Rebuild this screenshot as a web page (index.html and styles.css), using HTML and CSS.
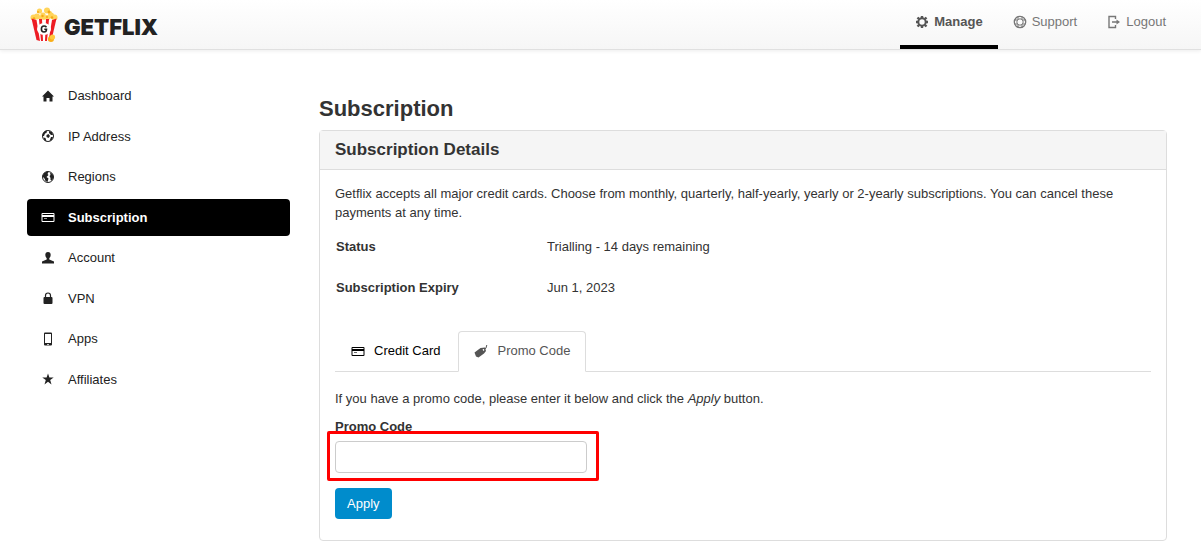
FILE: index.html
```
<!DOCTYPE html>
<html lang="en">
<head>
<meta charset="utf-8">
<meta name="viewport" content="width=device-width, initial-scale=1">
<title>Getflix - Subscription</title>
<link rel="stylesheet" href="styles.css">
</head>
<body>
<svg class="symbols" aria-hidden="true">
  <symbol id="card" viewBox="0 0 14 14"><path fill="currentColor" fill-rule="evenodd" d="M1.500 3h11q1 0 1 1v7q0 1-1 1h-11q-1 0-1-1V4q0-1 1-1zM1.500 4v1h11V4zM1.500 7v4h11V7z"/><path fill="currentColor" opacity=".6" d="M3 8h3v1H3z"/></symbol>
</svg>
<header class="topbar">
  <a class="brand" href="#">
    <svg class="brand-icon" viewBox="0 0 28 36" aria-hidden="true">
      <g fill="#ffd45a">
        <circle cx="9.500" cy="4" r="2.600"/><circle cx="17" cy="3.500" r="3"/><circle cx="13" cy="8" r="2.600"/><circle cx="20" cy="6" r="2"/>
        <circle cx="3.500" cy="10.500" r="3"/><circle cx="7" cy="9.500" r="3"/><circle cx="12" cy="11" r="3"/><circle cx="17" cy="11" r="3"/><circle cx="21" cy="8.500" r="3"/><circle cx="24.500" cy="10.500" r="3"/>
      </g>
      <g fill="#f5a914"><circle cx="4" cy="11.500" r="1.300"/><circle cx="8" cy="5" r="1"/><circle cx="19" cy="5" r="1.400"/><circle cx="12.500" cy="9" r="1.200"/><circle cx="22" cy="10.500" r="1.300"/><circle cx="17" cy="10" r="1"/></g>
      <path fill="#fff" d="M2 12l5 21q7 3 14 0l5-21-5 1-4-1-3 1-4-1-3 1z"/>
      <g fill="#ed1c24"><path d="M1.500 11.500l5 1.500 3.500 21-3.500-1z"/><path d="M9 12h3l1 22h-2z"/><path d="M16 12h3l-2 22h-2z"/><path d="M22 13l4.500-1.500-5 21.500-3 1z"/></g>
      <ellipse cx="14" cy="22" rx="7" ry="6" fill="#fff"/>
      <path d="M16.500 20.200q-1-1.200-2.500-1.200-2.600 0-2.600 3t2.600 3q2.500 0 2.500-2.700h-2.200" fill="none" stroke="#222" stroke-width="1.600"/>
      <circle cx="21" cy="32" r="3" fill="#f9ae17"/><circle cx="22.500" cy="30" r="2.600" fill="#ffc93c"/>
    </svg>
    <span class="brand-name">GETFLIX</span>
  </a>
  <nav class="topnav" aria-label="Main">
    <a class="toplink toplink-active" href="#">
      <svg class="icon" viewBox="0 0 14 14" aria-hidden="true"><circle cx="7" cy="7" r="3.700" fill="none" stroke="currentColor" stroke-width="2"/><path d="M7 1v2M7 11v2M1 7h2M11 7h2M2.500 2.500l1.700 1.700M9.800 9.800l1.700 1.700M11.500 2.500L9.800 4.200M4.200 9.800l-1.700 1.700" stroke="currentColor" stroke-width="2.400"/></svg>
      <span>Manage</span>
    </a>
    <a class="toplink" href="#">
      <svg class="icon" viewBox="0 0 14 14" aria-hidden="true"><g fill="none" stroke="currentColor"><circle cx="7" cy="7" r="5.700" stroke-width="1.300"/><circle cx="7" cy="7" r="3.200"/><path d="M5 1.500v3M9 1.500v3M5 9.500v3M9 9.500v3M1.500 5h3M1.500 9h3M9.500 5h3M9.500 9h3"/></g></svg>
      <span>Support</span>
    </a>
    <a class="toplink" href="#">
      <svg class="icon" viewBox="0 0 14 14" aria-hidden="true"><path d="M8.500 4V1.500h-6.500v11h6.500V10M5 7h6" fill="none" stroke="currentColor" stroke-width="1.400"/><path d="M9.500 4.500L13 7 9.500 9.500z" fill="currentColor"/></svg>
      <span>Logout</span>
    </a>
  </nav>
</header>
<div class="layout">
  <nav class="sidebar" aria-label="Account">
    <a class="sidelink" href="#"><svg class="icon" viewBox="0 0 14 14" aria-hidden="true"><path fill="currentColor" d="M7 1.500L13 7.500h-1.500v5h-3V9h-3v3.500h-3v-5H1z"/></svg><span>Dashboard</span></a>
    <a class="sidelink" href="#"><svg class="icon" viewBox="0 0 14 14" aria-hidden="true"><circle cx="7" cy="7" r="5.500" fill="none" stroke="currentColor"/><path fill="currentColor" d="M2 4l2-2 2-.5L5.500 4 4 4.500 3 7 1.500 7zM8 2l3 1 1 3-2 0-2-2zM5.500 6l2-1 1.500 2-1.500 2-2-1zM2.500 8.500l2 .5 1 3.500-2-1zM10 8l2 0-1 3-2.500 1z"/></svg><span>IP Address</span></a>
    <a class="sidelink" href="#"><svg class="icon" viewBox="0 0 14 14" aria-hidden="true"><circle cx="7" cy="7" r="5.500" fill="none" stroke="currentColor"/><path fill="currentColor" d="M1.500 6L3 3l3-1.500 1.500.5-1 2 1 1-2 2 2 1.500-1 3.500-2-1-1-2.500L2 7zM9 2.500l2.500 1.500L12.500 7 11 10.500 9.500 10V8L8.500 6l1-1z"/></svg><span>Regions</span></a>
    <a class="sidelink sidelink-active" href="#" aria-current="page"><svg class="icon" aria-hidden="true"><use href="#card"/></svg><span>Subscription</span></a>
    <a class="sidelink" href="#"><svg class="icon" viewBox="0 0 14 14" aria-hidden="true"><path fill="currentColor" d="M7 1q2.700 0 2.700 3Q9.700 6 8.300 7.300v1.200L13 10.500v2H1v-2l4.700-2V7.300Q4.300 6 4.300 4 4.300 1 7 1z"/></svg><span>Account</span></a>
    <a class="sidelink" href="#"><svg class="icon" viewBox="0 0 14 14" aria-hidden="true"><rect x="2.500" y="6" width="9" height="7" rx="1" fill="currentColor"/><path d="M4.500 6.500V4.500q0-2.500 2.500-2.500t2.500 2.500v2" fill="none" stroke="currentColor" stroke-width="1.200"/></svg><span>VPN</span></a>
    <a class="sidelink" href="#"><svg class="icon" viewBox="0 0 14 14" aria-hidden="true"><path fill="currentColor" fill-rule="evenodd" d="M4 .5h6q1 0 1 1v11q0 1-1 1H4q-1 0-1-1v-11q0-1 1-1zM4 2v9h6V2zM6 12v.8h2V12z"/></svg><span>Apps</span></a>
    <a class="sidelink" href="#"><svg class="icon" viewBox="0 0 14 14" aria-hidden="true"><path fill="currentColor" d="M7 1.500l1.400 4h4.300L9.200 8l1.300 4.500L7 9.800l-3.500 2.700L4.800 8 1.300 5.500h4.300z"/></svg><span>Affiliates</span></a>
  </nav>
  <main class="content">
    <h1 class="title">Subscription</h1>
    <section class="panel">
      <h2 class="panel-title">Subscription Details</h2>
      <div class="panel-body">
        <p class="text">Getflix accepts all major credit cards. Choose from monthly, quarterly, half-yearly, yearly or 2-yearly subscriptions. You can cancel these payments at any time.</p>
        <dl class="details">
          <dt>Status</dt><dd>Trialling - 14 days remaining</dd>
          <dt>Subscription Expiry</dt><dd>Jun 1, 2023</dd>
        </dl>
        <div class="tabs" role="tablist">
          <button class="tab" type="button" role="tab" aria-selected="false"><svg class="icon" aria-hidden="true"><use href="#card"/></svg><span>Credit Card</span></button>
          <button class="tab tab-active" type="button" role="tab" aria-selected="true"><svg class="icon" viewBox="0 0 14 14" aria-hidden="true"><path fill="currentColor" fill-rule="evenodd" d="M.5 8.500L6.500 4l4.500-.5 1 3.500-2 2.500-5.500 4L2 12.500zM9.500 5a.8.800 0 1 0 .1 0z"/><path d="M10 5.500q2.500-.5 2.800-4.500" fill="none" stroke="currentColor"/></svg><span>Promo Code</span></button>
        </div>
        <form class="promo">
          <p class="text">If you have a promo code, please enter it below and click the <em>Apply</em> button.</p>
          <label class="label" for="promo-code">Promo Code</label>
          <div class="field"><input class="input" id="promo-code" type="text"></div>
          <button class="apply" type="button">Apply</button>
        </form>
      </div>
    </section>
  </main>
</div>
</body>
</html>
```
FILE: styles.css
```
* { box-sizing: border-box; }
body {
  margin: 0;
  background: #fff;
  color: #333;
  font: 13px/19px "Liberation Sans", Arial, sans-serif;
}
a { color: inherit; text-decoration: none; }
.symbols { display: none; }
.icon { width: 14px; height: 14px; flex: none; }

.topbar {
  display: flex;
  justify-content: space-between;
  height: 50px;
  padding: 0 20px 0 30px;
  border-bottom: 1px solid #e0e0e0;
  background: linear-gradient(#fff, #f6f6f6);
  box-shadow: 0 1px 4px rgba(0, 0, 0, 0.08);
}
.brand { display: flex; align-items: center; gap: 6px; }
.brand-icon { width: 28px; height: 36px; }
.brand-name { padding-top: 4px; color: #222; font: 900 22px/28px Inter, sans-serif; }
.topnav { display: flex; }
.toplink {
  display: flex;
  align-items: center;
  gap: 5px;
  padding: 0 15px 2px;
  border-bottom: 4px solid transparent;
  color: #777;
}
.toplink-active { border-bottom-color: #000; color: #555; font-weight: bold; }

.layout {
  display: grid;
  grid-template-columns: 263px 1fr;
  gap: 29px;
  padding: 0 34px 0 27px;
}
.sidebar { display: flex; flex-direction: column; gap: 3px; padding-top: 27px; color: #222; }
.sidelink {
  display: flex;
  align-items: center;
  gap: 13px;
  padding: 9px 14px;
  border-radius: 4px;
  line-height: 1.5;
}
.sidelink-active { background: #000; color: #fff; font-weight: bold; }

.content { padding-top: 45px; }
.title { margin: 0 0 7px; font-size: 22px; line-height: 28px; font-weight: 900; }
.panel { border: 1px solid #ddd; border-radius: 4px; }
.panel-title {
  margin: 0;
  padding: 9px 15px;
  border-bottom: 1px solid #ddd;
  background: #f5f5f5;
  font-size: 17px;
  line-height: 20px;
  font-weight: 900;
}
.panel-body { padding: 14px 15px 21px; }
.text { margin: 0; }
.details {
  display: grid;
  grid-template-columns: 211px 1fr;
  row-gap: 22px;
  margin: 15px 0 34px;
  padding-left: 1px;
}
.details dt { font-weight: bold; }
.details dd { margin: 0; }

.tabs { display: flex; gap: 2px; height: 41px; border-bottom: 1px solid #ddd; }
.tab {
  display: flex;
  align-items: center;
  gap: 9px;
  height: 41px;
  padding: 0 15px 2px;
  border: 1px solid transparent;
  border-radius: 4px 4px 0 0;
  background: none;
  color: #000;
  font: inherit;
}
.tab-active { border-color: #ddd #ddd #fff; background: #fff; color: #555; }

.promo { display: flex; flex-direction: column; align-items: flex-start; margin-top: 17px; }
.label { margin: 9px 0 5px; font-weight: bold; }
.field { position: relative; width: 252px; }
.field::after {
  content: "";
  position: absolute;
  inset: -10px -12px -8px -8px;
  border: 3px solid #f00;
  border-radius: 2px;
  pointer-events: none;
}
.input {
  display: block;
  width: 100%;
  height: 32px;
  padding: 4px 8px;
  border: 1px solid #ccc;
  border-radius: 4px;
  font: inherit;
}
.apply {
  height: 31px;
  margin-top: 15px;
  padding: 0 12px;
  border: 0;
  border-radius: 4px;
  background: #008ccc;
  color: #fff;
  font: inherit;
}
```
